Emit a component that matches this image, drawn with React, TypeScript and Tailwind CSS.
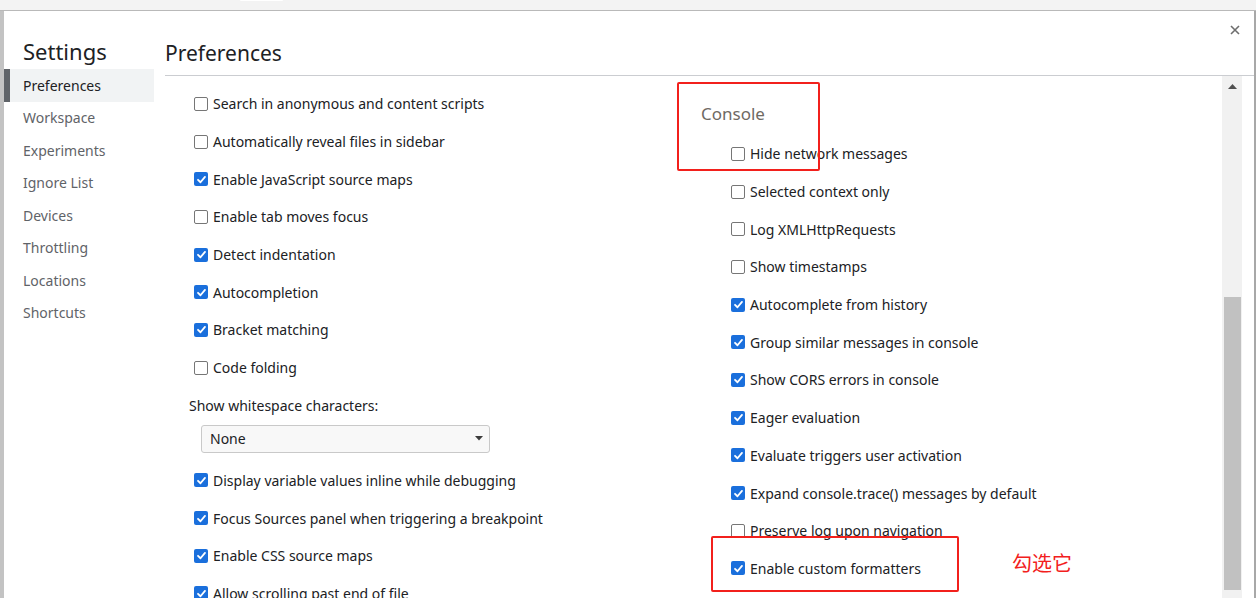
import type { ReactNode } from 'react';

const sidebarItems = [
  'Preferences',
  'Workspace',
  'Experiments',
  'Ignore List',
  'Devices',
  'Throttling',
  'Locations',
  'Shortcuts',
];

const leftTop: [string, boolean][] = [
  ['Search in anonymous and content scripts', false],
  ['Automatically reveal files in sidebar', false],
  ['Enable JavaScript source maps', true],
  ['Enable tab moves focus', false],
  ['Detect indentation', true],
  ['Autocompletion', true],
  ['Bracket matching', true],
  ['Code folding', false],
];

const leftBottom: [string, boolean][] = [
  ['Display variable values inline while debugging', true],
  ['Focus Sources panel when triggering a breakpoint', true],
  ['Enable CSS source maps', true],
  ['Allow scrolling past end of file', true],
];

const consoleItems: [string, boolean][] = [
  ['Hide network messages', false],
  ['Selected context only', false],
  ['Log XMLHttpRequests', false],
  ['Show timestamps', false],
  ['Autocomplete from history', true],
  ['Group similar messages in console', true],
  ['Show CORS errors in console', true],
  ['Eager evaluation', true],
  ['Evaluate triggers user activation', true],
  ['Expand console.trace() messages by default', true],
  ['Preserve log upon navigation', false],
  ['Enable custom formatters', true],
];

function Checkbox({ checked }: { checked: boolean }) {
  if (checked) {
    return (
      <span className="flex h-[14px] w-[14px] shrink-0 items-center justify-center rounded-[2px] bg-[#1a6fdc]">
        <svg width="11" height="11" viewBox="0 0 12 12">
          <path d="M2.2 6.3 L4.9 9 L9.8 3.2" fill="none" stroke="#fff" strokeWidth="2" strokeLinecap="round" strokeLinejoin="round" />
        </svg>
      </span>
    );
  }
  return <span className="h-[14px] w-[14px] shrink-0 rounded-[2px] border border-[#767676] bg-white" />;
}

function Row({ label, checked }: { label: string; checked: boolean }) {
  return (
    <div className="flex h-[37.7px] items-center gap-[5px] whitespace-nowrap text-[14px] text-[#202124]">
      <Checkbox checked={checked} />
      <span>{label}</span>
    </div>
  );
}

function RedBox({ className, children }: { className: string; children?: ReactNode }) {
  return <div className={`pointer-events-none absolute rounded-[2px] border-[2px] border-[#f2201c] ${className}`}>{children}</div>;
}

export default function App() {
  return (
    <div
      className="relative flex h-[598px] w-[1256px] flex-col overflow-hidden bg-white"
      style={{ fontFamily: '"Noto Sans", "Open Sans", sans-serif' }}
    >
      {/* top strip */}
      <div className="relative h-[11px] shrink-0 border-b border-[#b9b9b9] bg-[#f3f3f3]">
        <div className="absolute left-[240px] top-0 h-[1px] w-[43px] rounded-b bg-white" />
      </div>

      <div className="flex min-h-0 flex-1">
        <div className="w-[4px] shrink-0 bg-[#c3c3c3]" />

        {/* sidebar */}
        <div className="w-[150px] shrink-0 pt-[25px]">
          <div className="pl-[19px] text-[22px] leading-[30px] text-[#202124]">Settings</div>
          <div className="mt-[3px] flex flex-col">
            {sidebarItems.map((item, i) => (
              <div
                key={item}
                className={`flex h-[32.5px] items-center text-[14px] ${
                  i === 0 ? 'border-l-[6px] border-[#5f6368] bg-[#f1f3f4] pl-[13px] text-[#202124]' : 'pl-[19px] text-[#5f6368]'
                }`}
              >
                {item}
              </div>
            ))}
          </div>
        </div>

        {/* main */}
        <div className="flex min-w-0 flex-1 flex-col pl-[11px]">
          <div className="flex h-[65px] shrink-0 items-start justify-between border-b border-[#cbcdd1] pr-[14px]">
            <div className="pt-[28px] text-[21px] leading-[28px] text-[#202124]">Preferences</div>
            <svg className="mt-[14px]" width="10" height="10" viewBox="0 0 10 10">
              <path d="M1 1 L9 9 M9 1 L1 9" stroke="#6e6e6e" strokeWidth="1.6" />
            </svg>
          </div>

          <div className="flex min-h-0 flex-1 pr-[12px]">
            <div className="flex min-w-0 flex-1 overflow-hidden">
              {/* left column */}
              <div className="w-[536px] shrink-0 pt-[9px] pl-[29px]">
                {leftTop.map(([l, c]) => (
                  <Row key={l} label={l} checked={c} />
                ))}
                <div className="-ml-[5px] flex h-[37px] items-center text-[14px] text-[#202124]">Show whitespace characters:</div>
                <div className="ml-[7px] mt-[1px] flex h-[28px] w-[289px] items-center justify-between rounded-[3px] border border-[#c9c9c9] bg-[#f8f8f8] pl-[8px] pr-[6px] text-[14px] text-[#202124]">
                  <span>None</span>
                  <svg width="8" height="5" viewBox="0 0 8 5">
                    <path d="M0 0 H8 L4 4.5 Z" fill="#3c3c3c" />
                  </svg>
                </div>
                <div className="mt-[9px]">
                  {leftBottom.map(([l, c]) => (
                    <Row key={l} label={l} checked={c} />
                  ))}
                </div>
              </div>

              {/* right column */}
              <div className="shrink-0 pt-[9px]">
                <div className="h-[50px] pt-[17px] text-[17px] leading-[24px] text-[#6f6a63]">Console</div>
                <div className="pl-[30px]">
                  {consoleItems.map(([l, c]) => (
                    <Row key={l} label={l} checked={c} />
                  ))}
                </div>
              </div>
            </div>

            {/* scrollbar */}
            <div className="flex w-[20px] shrink-0 flex-col items-center bg-[#f1f1f1]">
              <svg className="mt-[8px]" width="9" height="5" viewBox="0 0 9 5">
                <path d="M0 5 L4.5 0 L9 5 Z" fill="#505050" />
              </svg>
              <div className="mt-[208px] h-[293px] w-[17px] bg-[#c1c1c1]" />
            </div>
          </div>
        </div>

        <div className="w-[2px] shrink-0 bg-[#a8a8a8]" />
      </div>

      {/* annotations */}
      <RedBox className="left-[677px] top-[82px] h-[89px] w-[143px]" />
      <RedBox className="left-[711px] top-[536px] h-[56px] w-[248px]" />
      <div
        className="absolute left-[1012px] top-[549px] text-[20px] leading-[28px] text-[#f2201c]"
        style={{ fontFamily: '"Noto Sans CJK SC", sans-serif' }}
      >
        勾选它
      </div>
    </div>
  );
}
